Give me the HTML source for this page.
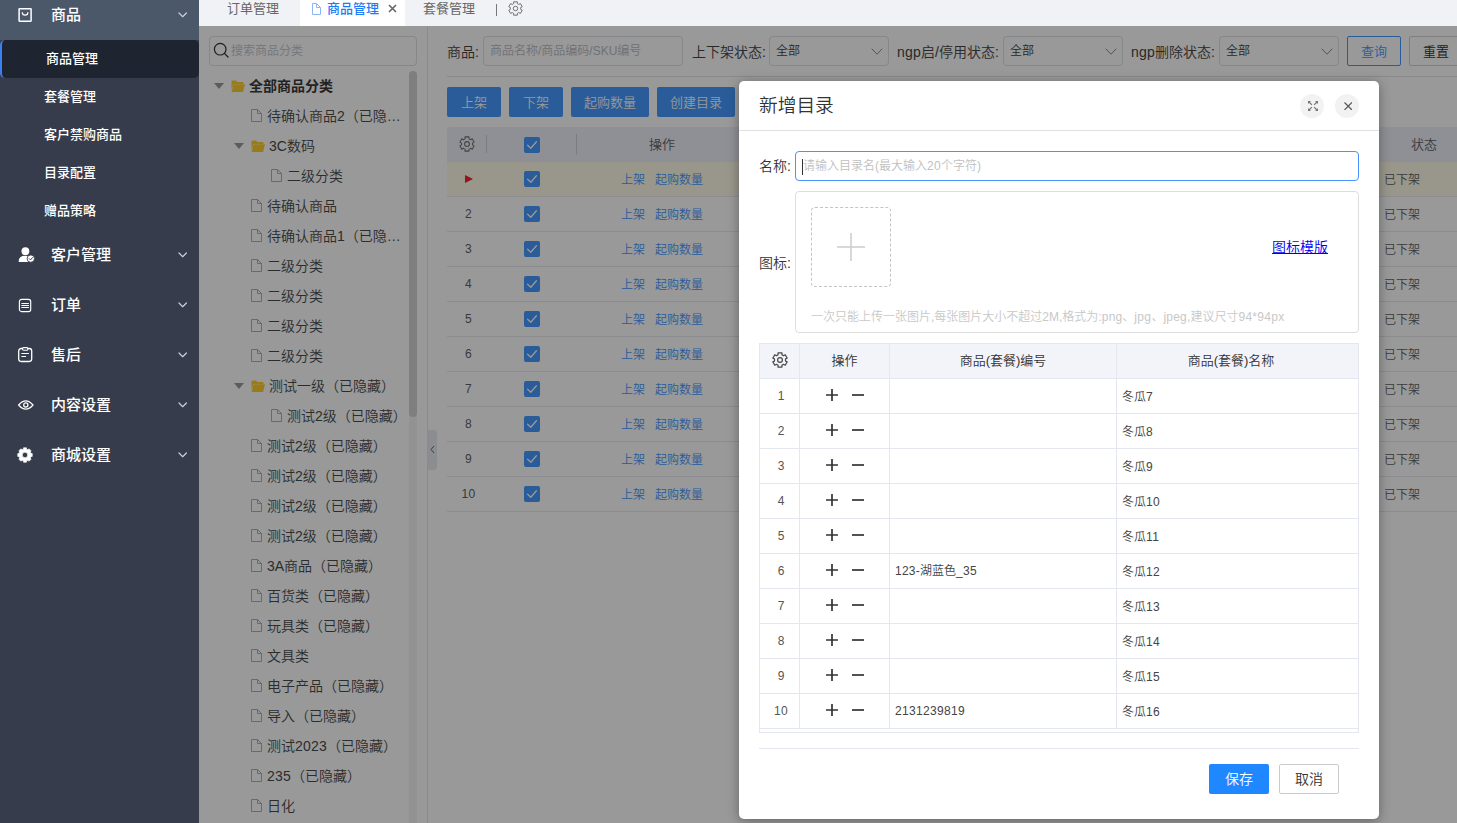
<!DOCTYPE html>
<html lang="zh-CN">
<head>
<meta charset="utf-8">
<title>商品管理</title>
<style>
*{box-sizing:border-box;margin:0;padding:0}
html,body{width:1457px;height:823px;overflow:hidden;background:#fff}
body{font-family:"Liberation Sans","Noto Sans CJK SC",sans-serif;font-size:13px;color:#333;position:relative}
.b{position:absolute;display:block}
.t{position:absolute;white-space:nowrap}
#side{position:absolute;left:0;top:0;width:199px;height:823px;background:#363c4b;overflow:hidden}
#tabs{position:absolute;left:199px;top:0;width:1258px;height:26px;background:#f0f2f5;overflow:hidden}
#content{position:absolute;left:199px;top:26px;width:1258px;height:797px;background:#fff;overflow:hidden;font-weight:350}
#mask{position:absolute;left:199px;top:26px;width:1258px;height:797px;background:rgba(0,0,0,.4)}
#modal{font-weight:350;position:absolute;left:739px;top:81px;width:640px;height:738px;background:#fff;border-radius:5px;box-shadow:0 2px 12px rgba(0,0,0,.35)}
</style>
</head>
<body>
<div id="side">
<div class="b" style="left:0px;top:0px;width:199px;height:40px;background:#4a586a;"></div>
<div class="b" style="left:0px;top:40px;width:199px;height:38px;background:#1f2530;border-left:2px solid #3d7ff0;border-radius:5px;"></div>
<svg class="b" style="left:18px;top:8px;" width="14" height="14" viewBox="0 0 14 14"><rect x="1.1" y="0.75" width="12" height="12.5" rx="0.4" fill="none" stroke="#fff" stroke-width="1.5"/><path d="M4.3 4.2 A2.8 3 0 0 0 9.9 4.2" fill="none" stroke="#fff" stroke-width="1.2"/></svg>
<div class="t " style="left:51px;top:2.8px;height:23px;line-height:23px;font-size:15px;color:#fff;font-weight:500;">商品</div>
<svg class="b" style="left:177.10000000000002px;top:10.6px;" width="11.4" height="8.0" viewBox="0 0 11.4 8.0"><path d="M2 2 L5.7 5.7 L9.4 2" fill="none" stroke="#c8ccd4" stroke-width="1.25" stroke-linecap="round" stroke-linejoin="round"/></svg>
<div class="t " style="left:46px;top:47.7px;height:21px;line-height:21px;font-size:13px;color:#fff;font-weight:500;">商品管理</div>
<div class="t " style="left:44px;top:85.7px;height:21px;line-height:21px;font-size:13px;color:#fff;font-weight:500;">套餐管理</div>
<div class="t " style="left:44px;top:123.7px;height:21px;line-height:21px;font-size:13px;color:#fff;font-weight:500;">客户禁购商品</div>
<div class="t " style="left:44px;top:161.7px;height:21px;line-height:21px;font-size:13px;color:#fff;font-weight:500;">目录配置</div>
<div class="t " style="left:44px;top:199.7px;height:21px;line-height:21px;font-size:13px;color:#fff;font-weight:500;">赠品策略</div>
<div class="t " style="left:51px;top:243px;height:23px;line-height:23px;font-size:15px;color:#fff;font-weight:500;">客户管理</div>
<svg class="b" style="left:177.10000000000002px;top:250.7px;" width="11.4" height="8.0" viewBox="0 0 11.4 8.0"><path d="M2 2 L5.7 5.7 L9.4 2" fill="none" stroke="#c8ccd4" stroke-width="1.25" stroke-linecap="round" stroke-linejoin="round"/></svg>
<div class="t " style="left:51px;top:293px;height:23px;line-height:23px;font-size:15px;color:#fff;font-weight:500;">订单</div>
<svg class="b" style="left:177.10000000000002px;top:300.7px;" width="11.4" height="8.0" viewBox="0 0 11.4 8.0"><path d="M2 2 L5.7 5.7 L9.4 2" fill="none" stroke="#c8ccd4" stroke-width="1.25" stroke-linecap="round" stroke-linejoin="round"/></svg>
<div class="t " style="left:51px;top:343px;height:23px;line-height:23px;font-size:15px;color:#fff;font-weight:500;">售后</div>
<svg class="b" style="left:177.10000000000002px;top:350.7px;" width="11.4" height="8.0" viewBox="0 0 11.4 8.0"><path d="M2 2 L5.7 5.7 L9.4 2" fill="none" stroke="#c8ccd4" stroke-width="1.25" stroke-linecap="round" stroke-linejoin="round"/></svg>
<div class="t " style="left:51px;top:393px;height:23px;line-height:23px;font-size:15px;color:#fff;font-weight:500;">内容设置</div>
<svg class="b" style="left:177.10000000000002px;top:400.7px;" width="11.4" height="8.0" viewBox="0 0 11.4 8.0"><path d="M2 2 L5.7 5.7 L9.4 2" fill="none" stroke="#c8ccd4" stroke-width="1.25" stroke-linecap="round" stroke-linejoin="round"/></svg>
<div class="t " style="left:51px;top:443px;height:23px;line-height:23px;font-size:15px;color:#fff;font-weight:500;">商城设置</div>
<svg class="b" style="left:177.10000000000002px;top:450.7px;" width="11.4" height="8.0" viewBox="0 0 11.4 8.0"><path d="M2 2 L5.7 5.7 L9.4 2" fill="none" stroke="#c8ccd4" stroke-width="1.25" stroke-linecap="round" stroke-linejoin="round"/></svg>
<svg class="b" style="left:17.5px;top:247px;" width="17" height="16" viewBox="0 0 17 16"><circle cx="7.4" cy="4.2" r="3.9" fill="#fff"/><path d="M0.6 14.6 Q0.6 8.8 7.4 8.8 Q13 8.8 13.6 13 L13.6 15 H1.4 Q0.6 15 0.6 14.6 Z" fill="#fff"/><circle cx="12.8" cy="11.6" r="3.7" fill="#fff" stroke="#363c4b" stroke-width="0.9"/><path d="M11.2 11.6 L12.5 12.9 L14.5 10.6" fill="none" stroke="#363c4b" stroke-width="1" stroke-linecap="round" stroke-linejoin="round"/></svg>
<svg class="b" style="left:18px;top:298px;" width="14" height="15" viewBox="0 0 14 15"><rect x="1.4" y="1.3" width="11.3" height="12.3" rx="2.2" fill="none" stroke="#fff" stroke-width="1.15"/><path d="M3.4 5.5 H10.9 M3.4 7.5 H10.9 M3.4 9.5 H10.9" stroke="#fff" stroke-width="1" fill="none"/></svg>
<svg class="b" style="left:18px;top:347px;" width="15" height="16" viewBox="0 0 15 16"><rect x="0.7" y="1.5" width="13" height="13" rx="2.4" fill="none" stroke="#fff" stroke-width="1.3"/><rect x="4.5" y="0.6" width="5.4" height="2.6" rx="1.2" fill="#363c4b" stroke="#fff" stroke-width="1.1"/><path d="M3.4 6.5 H10.9 M3.4 9.5 H8" stroke="#fff" stroke-width="1.1" fill="none"/></svg>
<svg class="b" style="left:18px;top:399px;" width="16" height="12" viewBox="0 0 16 12"><path d="M0.6 6 Q7.8 -2.2 15 6 Q7.8 14.2 0.6 6 Z" fill="none" stroke="#fff" stroke-width="1.2"/><circle cx="7.8" cy="6" r="2.1" fill="none" stroke="#fff" stroke-width="1.3"/></svg>
<svg class="b" style="left:17.1px;top:447.3px;" width="16" height="16" viewBox="0 0 16 16"><path d="M6.36 2.13 L6.56 0.74 L9.44 0.74 L9.64 2.13 L10.99 2.68 L12.11 1.85 L14.15 3.89 L13.32 5.01 L13.87 6.36 L15.26 6.56 L15.26 9.44 L13.87 9.64 L13.32 10.99 L14.15 12.11 L12.11 14.15 L10.99 13.32 L9.64 13.87 L9.44 15.26 L6.56 15.26 L6.36 13.87 L5.01 13.32 L3.89 14.15 L1.85 12.11 L2.68 10.99 L2.13 9.64 L0.74 9.44 L0.74 6.56 L2.13 6.36 L2.68 5.01 L1.85 3.89 L3.89 1.85 L5.01 2.68Z M8 5.3a2.7 2.7 0 1 0 0 5.4 2.7 2.7 0 0 0 0-5.4z" fill="#fff" fill-rule="evenodd" stroke="#fff" stroke-width="0.6" stroke-linejoin="round"/></svg>
</div>
<div id="tabs">
<div class="b" style="left:101px;top:0px;width:105px;height:26px;background:#fff;"></div>
<div class="t " style="left:28px;top:-2.2px;height:21px;line-height:21px;font-size:13px;color:#666;">订单管理</div>
<svg class="b" style="left:113px;top:3px;" width="9" height="12" viewBox="0 0 9 12"><path d="M0.5 0.5 H4.5 L8.5 4.5 V11.5 H0.5 Z M4.5 0.5 V4.5 H8.5" fill="none" stroke="#8fb4f5" stroke-width="1" stroke-linejoin="round"/></svg>
<div class="t " style="left:128px;top:-2.2px;height:21px;line-height:21px;font-size:13px;color:#1f7bf5;font-weight:500;">商品管理</div>
<svg class="b" style="left:188.8px;top:4.2px;" width="9" height="9" viewBox="0 0 9 9"><path d="M1 1 L8 8 M8 1 L1 8" stroke="#666" stroke-width="1.6" fill="none"/></svg>
<div class="t " style="left:224px;top:-2.2px;height:21px;line-height:21px;font-size:13px;color:#666;">套餐管理</div>
<div class="b" style="left:296.5px;top:4px;width:1px;height:12px;background:#777;"></div>
<svg class="b" style="left:308.5px;top:0.5px;" width="15" height="15" viewBox="0 0 16 16"><path d="M5.44 3.13 L6.06 2.85 L6.03 0.87 L9.97 0.87 L9.94 2.85 L10.56 3.13 L10.94 3.35 L11.49 3.75 L13.19 2.72 L15.16 6.14 L13.43 7.10 L13.50 7.78 L13.50 8.22 L13.43 8.90 L15.16 9.86 L13.19 13.28 L11.49 12.25 L10.94 12.65 L10.56 12.87 L9.94 13.15 L9.97 15.13 L6.03 15.13 L6.06 13.15 L5.44 12.87 L5.06 12.65 L4.51 12.25 L2.81 13.28 L0.84 9.86 L2.57 8.90 L2.50 8.22 L2.50 7.78 L2.57 7.10 L0.84 6.14 L2.81 2.72 L4.51 3.75 L5.06 3.35Z" fill="none" stroke="#666" stroke-width="1" stroke-linejoin="round"/><circle cx="8" cy="8" r="2.4" fill="none" stroke="#666" stroke-width="1"/></svg>
</div>
<div id="content">
<div class="b" style="left:-199px;top:-26px;width:1457px;height:823px">
<div class="b" style="left:209px;top:36px;width:208px;height:30px;border:1px solid #dfe1e6;border-radius:4px;"></div>
<svg class="b" style="left:213px;top:42px;" width="16" height="16" viewBox="0 0 16 16"><circle cx="7.2" cy="7.2" r="5.8" fill="none" stroke="#333" stroke-width="1.2"/><path d="M11.4 11.4 L15 15" stroke="#333" stroke-width="1.3" stroke-linecap="round"/></svg>
<div class="t " style="left:231px;top:41px;height:20px;line-height:20px;font-size:12px;color:#c0c4cc;">搜索商品分类</div>
<div class="b" style="left:409px;top:71px;width:8px;height:760px;background:#f3f3f3;border-radius:4px;"></div>
<div class="b" style="left:409px;top:71px;width:8px;height:346px;background:#d4d4d4;border-radius:4px;"></div>
<div class="b" style="left:427px;top:26px;width:1px;height:800px;background:#e8e8e8;"></div>
<div class="b" style="left:428px;top:430px;width:9px;height:40px;background:#e9ebf2;border-radius:0 4px 4px 0;"></div>
<svg class="b" style="left:430px;top:445px;" width="5" height="9" viewBox="0 0 5 9"><path d="M4 1 L1 4.5 L4 8" fill="none" stroke="#666" stroke-width="1"/></svg>
<svg class="b" style="left:214px;top:83px;" width="10" height="6" viewBox="0 0 10 6"><path d="M0 0 H10 L5 6 Z" fill="#999"/></svg>
<svg class="b" style="left:231px;top:80px;" width="14" height="12" viewBox="0 0 14 12"><path d="M0.5 1.5 Q0.5 0.5 1.5 0.5 H5 L6.5 2 H11.5 Q12.5 2 12.5 3 V4 H2.5 L0.5 10 Z" fill="#ffce2e"/><path d="M2.6 4.2 H14 L12.2 11.5 Q12 12 11.4 12 H1 Q0.4 12 0.6 11.4 Z" fill="#ffce2e"/></svg>
<div class="t " style="left:249px;top:75px;height:22px;line-height:22px;font-size:14px;color:#3a3a3a;font-weight:bold;">全部商品分类</div>
<svg class="b" style="left:251px;top:109px;" width="11" height="13" viewBox="0 0 11 13"><path d="M0.5 0.5 H6.5 L10.5 4.5 V12.5 H0.5 Z M6.5 0.5 V4.5 H10.5" fill="none" stroke="#b0b0b4" stroke-width="1" stroke-linejoin="round"/></svg>
<div class="t " style="left:267px;top:105px;height:22px;line-height:22px;font-size:14px;color:#4a4a4a;">待确认商品2（已隐…</div>
<svg class="b" style="left:234px;top:143px;" width="10" height="6" viewBox="0 0 10 6"><path d="M0 0 H10 L5 6 Z" fill="#999"/></svg>
<svg class="b" style="left:251px;top:140px;" width="14" height="12" viewBox="0 0 14 12"><path d="M0.5 1.5 Q0.5 0.5 1.5 0.5 H5 L6.5 2 H11.5 Q12.5 2 12.5 3 V4 H2.5 L0.5 10 Z" fill="#ffce2e"/><path d="M2.6 4.2 H14 L12.2 11.5 Q12 12 11.4 12 H1 Q0.4 12 0.6 11.4 Z" fill="#ffce2e"/></svg>
<div class="t " style="left:269px;top:135px;height:22px;line-height:22px;font-size:14px;color:#4a4a4a;">3C数码</div>
<svg class="b" style="left:271px;top:169px;" width="11" height="13" viewBox="0 0 11 13"><path d="M0.5 0.5 H6.5 L10.5 4.5 V12.5 H0.5 Z M6.5 0.5 V4.5 H10.5" fill="none" stroke="#b0b0b4" stroke-width="1" stroke-linejoin="round"/></svg>
<div class="t " style="left:287px;top:165px;height:22px;line-height:22px;font-size:14px;color:#4a4a4a;">二级分类</div>
<svg class="b" style="left:251px;top:199px;" width="11" height="13" viewBox="0 0 11 13"><path d="M0.5 0.5 H6.5 L10.5 4.5 V12.5 H0.5 Z M6.5 0.5 V4.5 H10.5" fill="none" stroke="#b0b0b4" stroke-width="1" stroke-linejoin="round"/></svg>
<div class="t " style="left:267px;top:195px;height:22px;line-height:22px;font-size:14px;color:#4a4a4a;">待确认商品</div>
<svg class="b" style="left:251px;top:229px;" width="11" height="13" viewBox="0 0 11 13"><path d="M0.5 0.5 H6.5 L10.5 4.5 V12.5 H0.5 Z M6.5 0.5 V4.5 H10.5" fill="none" stroke="#b0b0b4" stroke-width="1" stroke-linejoin="round"/></svg>
<div class="t " style="left:267px;top:225px;height:22px;line-height:22px;font-size:14px;color:#4a4a4a;">待确认商品1（已隐…</div>
<svg class="b" style="left:251px;top:259px;" width="11" height="13" viewBox="0 0 11 13"><path d="M0.5 0.5 H6.5 L10.5 4.5 V12.5 H0.5 Z M6.5 0.5 V4.5 H10.5" fill="none" stroke="#b0b0b4" stroke-width="1" stroke-linejoin="round"/></svg>
<div class="t " style="left:267px;top:255px;height:22px;line-height:22px;font-size:14px;color:#4a4a4a;">二级分类</div>
<svg class="b" style="left:251px;top:289px;" width="11" height="13" viewBox="0 0 11 13"><path d="M0.5 0.5 H6.5 L10.5 4.5 V12.5 H0.5 Z M6.5 0.5 V4.5 H10.5" fill="none" stroke="#b0b0b4" stroke-width="1" stroke-linejoin="round"/></svg>
<div class="t " style="left:267px;top:285px;height:22px;line-height:22px;font-size:14px;color:#4a4a4a;">二级分类</div>
<svg class="b" style="left:251px;top:319px;" width="11" height="13" viewBox="0 0 11 13"><path d="M0.5 0.5 H6.5 L10.5 4.5 V12.5 H0.5 Z M6.5 0.5 V4.5 H10.5" fill="none" stroke="#b0b0b4" stroke-width="1" stroke-linejoin="round"/></svg>
<div class="t " style="left:267px;top:315px;height:22px;line-height:22px;font-size:14px;color:#4a4a4a;">二级分类</div>
<svg class="b" style="left:251px;top:349px;" width="11" height="13" viewBox="0 0 11 13"><path d="M0.5 0.5 H6.5 L10.5 4.5 V12.5 H0.5 Z M6.5 0.5 V4.5 H10.5" fill="none" stroke="#b0b0b4" stroke-width="1" stroke-linejoin="round"/></svg>
<div class="t " style="left:267px;top:345px;height:22px;line-height:22px;font-size:14px;color:#4a4a4a;">二级分类</div>
<svg class="b" style="left:234px;top:383px;" width="10" height="6" viewBox="0 0 10 6"><path d="M0 0 H10 L5 6 Z" fill="#999"/></svg>
<svg class="b" style="left:251px;top:380px;" width="14" height="12" viewBox="0 0 14 12"><path d="M0.5 1.5 Q0.5 0.5 1.5 0.5 H5 L6.5 2 H11.5 Q12.5 2 12.5 3 V4 H2.5 L0.5 10 Z" fill="#ffce2e"/><path d="M2.6 4.2 H14 L12.2 11.5 Q12 12 11.4 12 H1 Q0.4 12 0.6 11.4 Z" fill="#ffce2e"/></svg>
<div class="t " style="left:269px;top:375px;height:22px;line-height:22px;font-size:14px;color:#4a4a4a;">测试一级（已隐藏）</div>
<svg class="b" style="left:271px;top:409px;" width="11" height="13" viewBox="0 0 11 13"><path d="M0.5 0.5 H6.5 L10.5 4.5 V12.5 H0.5 Z M6.5 0.5 V4.5 H10.5" fill="none" stroke="#b0b0b4" stroke-width="1" stroke-linejoin="round"/></svg>
<div class="t " style="left:287px;top:405px;height:22px;line-height:22px;font-size:14px;color:#4a4a4a;">测试2级（已隐藏）</div>
<svg class="b" style="left:251px;top:439px;" width="11" height="13" viewBox="0 0 11 13"><path d="M0.5 0.5 H6.5 L10.5 4.5 V12.5 H0.5 Z M6.5 0.5 V4.5 H10.5" fill="none" stroke="#b0b0b4" stroke-width="1" stroke-linejoin="round"/></svg>
<div class="t " style="left:267px;top:435px;height:22px;line-height:22px;font-size:14px;color:#4a4a4a;">测试2级（已隐藏）</div>
<svg class="b" style="left:251px;top:469px;" width="11" height="13" viewBox="0 0 11 13"><path d="M0.5 0.5 H6.5 L10.5 4.5 V12.5 H0.5 Z M6.5 0.5 V4.5 H10.5" fill="none" stroke="#b0b0b4" stroke-width="1" stroke-linejoin="round"/></svg>
<div class="t " style="left:267px;top:465px;height:22px;line-height:22px;font-size:14px;color:#4a4a4a;">测试2级（已隐藏）</div>
<svg class="b" style="left:251px;top:499px;" width="11" height="13" viewBox="0 0 11 13"><path d="M0.5 0.5 H6.5 L10.5 4.5 V12.5 H0.5 Z M6.5 0.5 V4.5 H10.5" fill="none" stroke="#b0b0b4" stroke-width="1" stroke-linejoin="round"/></svg>
<div class="t " style="left:267px;top:495px;height:22px;line-height:22px;font-size:14px;color:#4a4a4a;">测试2级（已隐藏）</div>
<svg class="b" style="left:251px;top:529px;" width="11" height="13" viewBox="0 0 11 13"><path d="M0.5 0.5 H6.5 L10.5 4.5 V12.5 H0.5 Z M6.5 0.5 V4.5 H10.5" fill="none" stroke="#b0b0b4" stroke-width="1" stroke-linejoin="round"/></svg>
<div class="t " style="left:267px;top:525px;height:22px;line-height:22px;font-size:14px;color:#4a4a4a;">测试2级（已隐藏）</div>
<svg class="b" style="left:251px;top:559px;" width="11" height="13" viewBox="0 0 11 13"><path d="M0.5 0.5 H6.5 L10.5 4.5 V12.5 H0.5 Z M6.5 0.5 V4.5 H10.5" fill="none" stroke="#b0b0b4" stroke-width="1" stroke-linejoin="round"/></svg>
<div class="t " style="left:267px;top:555px;height:22px;line-height:22px;font-size:14px;color:#4a4a4a;">3A商品（已隐藏）</div>
<svg class="b" style="left:251px;top:589px;" width="11" height="13" viewBox="0 0 11 13"><path d="M0.5 0.5 H6.5 L10.5 4.5 V12.5 H0.5 Z M6.5 0.5 V4.5 H10.5" fill="none" stroke="#b0b0b4" stroke-width="1" stroke-linejoin="round"/></svg>
<div class="t " style="left:267px;top:585px;height:22px;line-height:22px;font-size:14px;color:#4a4a4a;">百货类（已隐藏）</div>
<svg class="b" style="left:251px;top:619px;" width="11" height="13" viewBox="0 0 11 13"><path d="M0.5 0.5 H6.5 L10.5 4.5 V12.5 H0.5 Z M6.5 0.5 V4.5 H10.5" fill="none" stroke="#b0b0b4" stroke-width="1" stroke-linejoin="round"/></svg>
<div class="t " style="left:267px;top:615px;height:22px;line-height:22px;font-size:14px;color:#4a4a4a;">玩具类（已隐藏）</div>
<svg class="b" style="left:251px;top:649px;" width="11" height="13" viewBox="0 0 11 13"><path d="M0.5 0.5 H6.5 L10.5 4.5 V12.5 H0.5 Z M6.5 0.5 V4.5 H10.5" fill="none" stroke="#b0b0b4" stroke-width="1" stroke-linejoin="round"/></svg>
<div class="t " style="left:267px;top:645px;height:22px;line-height:22px;font-size:14px;color:#4a4a4a;">文具类</div>
<svg class="b" style="left:251px;top:679px;" width="11" height="13" viewBox="0 0 11 13"><path d="M0.5 0.5 H6.5 L10.5 4.5 V12.5 H0.5 Z M6.5 0.5 V4.5 H10.5" fill="none" stroke="#b0b0b4" stroke-width="1" stroke-linejoin="round"/></svg>
<div class="t " style="left:267px;top:675px;height:22px;line-height:22px;font-size:14px;color:#4a4a4a;">电子产品（已隐藏）</div>
<svg class="b" style="left:251px;top:709px;" width="11" height="13" viewBox="0 0 11 13"><path d="M0.5 0.5 H6.5 L10.5 4.5 V12.5 H0.5 Z M6.5 0.5 V4.5 H10.5" fill="none" stroke="#b0b0b4" stroke-width="1" stroke-linejoin="round"/></svg>
<div class="t " style="left:267px;top:705px;height:22px;line-height:22px;font-size:14px;color:#4a4a4a;">导入（已隐藏）</div>
<svg class="b" style="left:251px;top:739px;" width="11" height="13" viewBox="0 0 11 13"><path d="M0.5 0.5 H6.5 L10.5 4.5 V12.5 H0.5 Z M6.5 0.5 V4.5 H10.5" fill="none" stroke="#b0b0b4" stroke-width="1" stroke-linejoin="round"/></svg>
<div class="t " style="left:267px;top:735px;height:22px;line-height:22px;font-size:14px;color:#4a4a4a;">测试<span style="letter-spacing:0.21px">2023</span>（已隐藏）</div>
<svg class="b" style="left:251px;top:769px;" width="11" height="13" viewBox="0 0 11 13"><path d="M0.5 0.5 H6.5 L10.5 4.5 V12.5 H0.5 Z M6.5 0.5 V4.5 H10.5" fill="none" stroke="#b0b0b4" stroke-width="1" stroke-linejoin="round"/></svg>
<div class="t " style="left:267px;top:765px;height:22px;line-height:22px;font-size:14px;color:#4a4a4a;"><span style="letter-spacing:0.21px">235</span>（已隐藏）</div>
<svg class="b" style="left:251px;top:799px;" width="11" height="13" viewBox="0 0 11 13"><path d="M0.5 0.5 H6.5 L10.5 4.5 V12.5 H0.5 Z M6.5 0.5 V4.5 H10.5" fill="none" stroke="#b0b0b4" stroke-width="1" stroke-linejoin="round"/></svg>
<div class="t " style="left:267px;top:795px;height:22px;line-height:22px;font-size:14px;color:#4a4a4a;">日化</div>
<div class="t " style="left:447px;top:41px;height:22px;line-height:22px;font-size:14px;color:#444;">商品:</div>
<div class="b" style="left:483px;top:36px;width:200px;height:30px;border:1px solid #dfe1e6;border-radius:4px;"></div>
<div class="t " style="left:490px;top:41px;height:20px;line-height:20px;font-size:12px;color:#b8bcc4;">商品名称/商品编码/SKU编号</div>
<div class="t " style="left:692px;top:41px;height:22px;line-height:22px;font-size:14px;color:#444;">上下架状态:</div>
<div class="b" style="left:769px;top:36px;width:120px;height:30px;border:1px solid #dfe1e6;border-radius:4px;"></div><div class="t " style="left:776px;top:41px;height:20px;line-height:20px;font-size:12px;color:#444;">全部</div><svg class="b" style="left:870.0px;top:46.85px;" width="14" height="9.5" viewBox="0 0 14 9.5"><path d="M2 2 L7 7.2 L12 2" fill="none" stroke="#8c8c8c" stroke-width="1" stroke-linecap="round" stroke-linejoin="round"/></svg>
<div class="t " style="left:897px;top:41px;height:22px;line-height:22px;font-size:14px;color:#444;"><span style="letter-spacing:0.21px">ngp</span>启/停用状态:</div>
<div class="b" style="left:1003px;top:36px;width:120px;height:30px;border:1px solid #dfe1e6;border-radius:4px;"></div><div class="t " style="left:1010px;top:41px;height:20px;line-height:20px;font-size:12px;color:#444;">全部</div><svg class="b" style="left:1104.0px;top:46.85px;" width="14" height="9.5" viewBox="0 0 14 9.5"><path d="M2 2 L7 7.2 L12 2" fill="none" stroke="#8c8c8c" stroke-width="1" stroke-linecap="round" stroke-linejoin="round"/></svg>
<div class="t " style="left:1131px;top:41px;height:22px;line-height:22px;font-size:14px;color:#444;"><span style="letter-spacing:0.21px">ngp</span>删除状态:</div>
<div class="b" style="left:1219px;top:36px;width:120px;height:30px;border:1px solid #dfe1e6;border-radius:4px;"></div><div class="t " style="left:1226px;top:41px;height:20px;line-height:20px;font-size:12px;color:#444;">全部</div><svg class="b" style="left:1320.0px;top:46.85px;" width="14" height="9.5" viewBox="0 0 14 9.5"><path d="M2 2 L7 7.2 L12 2" fill="none" stroke="#8c8c8c" stroke-width="1" stroke-linecap="round" stroke-linejoin="round"/></svg>
<div class="b" style="left:1347px;top:36px;width:54px;height:30px;border:1px solid #4599ff;border-radius:2px;"></div>
<div class="t " style="left:1347px;top:40.5px;height:21px;line-height:21px;font-size:13px;color:#4599ff;width:54px;text-align:center;">查询</div>
<div class="b" style="left:1409px;top:36px;width:54px;height:30px;border:1px solid #d4d4d4;border-radius:2px;"></div>
<div class="t " style="left:1409px;top:40.5px;height:21px;line-height:21px;font-size:13px;color:#333;width:54px;text-align:center;">重置</div>
<div class="b" style="left:447px;top:76px;width:1010px;height:1px;background:#e4e4e4;"></div>
<div class="b" style="left:447px;top:87px;width:54px;height:30px;background:#4599ff;border-radius:2px;"></div>
<div class="t " style="left:447px;top:91.5px;height:21px;line-height:21px;font-size:13px;color:#fff;width:54px;text-align:center;">上架</div>
<div class="b" style="left:509px;top:87px;width:54px;height:30px;background:#4599ff;border-radius:2px;"></div>
<div class="t " style="left:509px;top:91.5px;height:21px;line-height:21px;font-size:13px;color:#fff;width:54px;text-align:center;">下架</div>
<div class="b" style="left:571px;top:87px;width:78px;height:30px;background:#4599ff;border-radius:2px;"></div>
<div class="t " style="left:571px;top:91.5px;height:21px;line-height:21px;font-size:13px;color:#fff;width:78px;text-align:center;">起购数量</div>
<div class="b" style="left:657px;top:87px;width:78px;height:30px;background:#4599ff;border-radius:2px;"></div>
<div class="t " style="left:657px;top:91.5px;height:21px;line-height:21px;font-size:13px;color:#fff;width:78px;text-align:center;">创建目录</div>
<div class="b" style="left:447px;top:127px;width:1010px;height:35px;background:#eef0f8;border-radius:4px 0 0 0;"></div>
<svg class="b" style="left:459.0px;top:135.8px;" width="16" height="16" viewBox="0 0 16 16"><path d="M5.44 3.13 L6.06 2.85 L6.03 0.87 L9.97 0.87 L9.94 2.85 L10.56 3.13 L10.94 3.35 L11.49 3.75 L13.19 2.72 L15.16 6.14 L13.43 7.10 L13.50 7.78 L13.50 8.22 L13.43 8.90 L15.16 9.86 L13.19 13.28 L11.49 12.25 L10.94 12.65 L10.56 12.87 L9.94 13.15 L9.97 15.13 L6.03 15.13 L6.06 13.15 L5.44 12.87 L5.06 12.65 L4.51 12.25 L2.81 13.28 L0.84 9.86 L2.57 8.90 L2.50 8.22 L2.50 7.78 L2.57 7.10 L0.84 6.14 L2.81 2.72 L4.51 3.75 L5.06 3.35Z" fill="none" stroke="#707070" stroke-width="1.05" stroke-linejoin="round"/><circle cx="8" cy="8" r="2.4" fill="none" stroke="#707070" stroke-width="1.05"/></svg>
<div class="b" style="left:486px;top:135px;width:1px;height:18px;background:#cfd0da;"></div>
<div class="b" style="left:576px;top:134px;width:1px;height:21px;background:#cfd0da;"></div>
<svg class="b" style="left:524px;top:137px;" width="16" height="16" viewBox="0 0 16 16"><rect x="0" y="0" width="16" height="16" rx="2" fill="#4599ff"/><path d="M3.6 8.2 L6.8 11.2 L12.4 4.8" fill="none" stroke="#fff" stroke-width="1.3" stroke-linecap="round" stroke-linejoin="round"/></svg>
<div class="t " style="left:577px;top:134px;height:21px;line-height:21px;font-size:13px;color:#606266;width:170px;text-align:center;">操作</div>
<div class="t " style="left:1390px;top:134px;height:21px;line-height:21px;font-size:13px;color:#606266;width:68px;text-align:center;">状态</div>
<div class="b" style="left:447px;top:162px;width:1010px;height:34px;background:#fffae8;"></div>
<svg class="b" style="left:465px;top:175px;" width="8" height="8" viewBox="0 0 8 8"><path d="M0 0 L8 4 L0 8 Z" fill="#f5222d"/></svg>
<div class="b" style="left:447px;top:196px;width:1010px;height:1px;background:#e8eaf0;"></div>
<svg class="b" style="left:524px;top:171px;" width="16" height="16" viewBox="0 0 16 16"><rect x="0" y="0" width="16" height="16" rx="2" fill="#4599ff"/><path d="M3.6 8.2 L6.8 11.2 L12.4 4.8" fill="none" stroke="#fff" stroke-width="1.3" stroke-linecap="round" stroke-linejoin="round"/></svg>
<div class="t " style="left:621px;top:169.5px;height:20px;line-height:20px;font-size:12px;color:#4599ff;">上架</div>
<div class="t " style="left:655px;top:169.5px;height:20px;line-height:20px;font-size:12px;color:#4599ff;">起购数量</div>
<div class="t " style="left:1384px;top:169.5px;height:20px;line-height:20px;font-size:12px;color:#606266;">已下架</div>
<div class="t " style="left:447.4px;top:203.6px;height:20px;line-height:20px;font-size:12px;color:#606266;width:42px;text-align:center;">2</div>
<div class="b" style="left:447px;top:231px;width:1010px;height:1px;background:#e8eaf0;"></div>
<svg class="b" style="left:524px;top:206px;" width="16" height="16" viewBox="0 0 16 16"><rect x="0" y="0" width="16" height="16" rx="2" fill="#4599ff"/><path d="M3.6 8.2 L6.8 11.2 L12.4 4.8" fill="none" stroke="#fff" stroke-width="1.3" stroke-linecap="round" stroke-linejoin="round"/></svg>
<div class="t " style="left:621px;top:204.5px;height:20px;line-height:20px;font-size:12px;color:#4599ff;">上架</div>
<div class="t " style="left:655px;top:204.5px;height:20px;line-height:20px;font-size:12px;color:#4599ff;">起购数量</div>
<div class="t " style="left:1384px;top:204.5px;height:20px;line-height:20px;font-size:12px;color:#606266;">已下架</div>
<div class="t " style="left:447.4px;top:238.6px;height:20px;line-height:20px;font-size:12px;color:#606266;width:42px;text-align:center;">3</div>
<div class="b" style="left:447px;top:266px;width:1010px;height:1px;background:#e8eaf0;"></div>
<svg class="b" style="left:524px;top:241px;" width="16" height="16" viewBox="0 0 16 16"><rect x="0" y="0" width="16" height="16" rx="2" fill="#4599ff"/><path d="M3.6 8.2 L6.8 11.2 L12.4 4.8" fill="none" stroke="#fff" stroke-width="1.3" stroke-linecap="round" stroke-linejoin="round"/></svg>
<div class="t " style="left:621px;top:239.5px;height:20px;line-height:20px;font-size:12px;color:#4599ff;">上架</div>
<div class="t " style="left:655px;top:239.5px;height:20px;line-height:20px;font-size:12px;color:#4599ff;">起购数量</div>
<div class="t " style="left:1384px;top:239.5px;height:20px;line-height:20px;font-size:12px;color:#606266;">已下架</div>
<div class="t " style="left:447.4px;top:273.6px;height:20px;line-height:20px;font-size:12px;color:#606266;width:42px;text-align:center;">4</div>
<div class="b" style="left:447px;top:301px;width:1010px;height:1px;background:#e8eaf0;"></div>
<svg class="b" style="left:524px;top:276px;" width="16" height="16" viewBox="0 0 16 16"><rect x="0" y="0" width="16" height="16" rx="2" fill="#4599ff"/><path d="M3.6 8.2 L6.8 11.2 L12.4 4.8" fill="none" stroke="#fff" stroke-width="1.3" stroke-linecap="round" stroke-linejoin="round"/></svg>
<div class="t " style="left:621px;top:274.5px;height:20px;line-height:20px;font-size:12px;color:#4599ff;">上架</div>
<div class="t " style="left:655px;top:274.5px;height:20px;line-height:20px;font-size:12px;color:#4599ff;">起购数量</div>
<div class="t " style="left:1384px;top:274.5px;height:20px;line-height:20px;font-size:12px;color:#606266;">已下架</div>
<div class="t " style="left:447.4px;top:308.6px;height:20px;line-height:20px;font-size:12px;color:#606266;width:42px;text-align:center;">5</div>
<div class="b" style="left:447px;top:336px;width:1010px;height:1px;background:#e8eaf0;"></div>
<svg class="b" style="left:524px;top:311px;" width="16" height="16" viewBox="0 0 16 16"><rect x="0" y="0" width="16" height="16" rx="2" fill="#4599ff"/><path d="M3.6 8.2 L6.8 11.2 L12.4 4.8" fill="none" stroke="#fff" stroke-width="1.3" stroke-linecap="round" stroke-linejoin="round"/></svg>
<div class="t " style="left:621px;top:309.5px;height:20px;line-height:20px;font-size:12px;color:#4599ff;">上架</div>
<div class="t " style="left:655px;top:309.5px;height:20px;line-height:20px;font-size:12px;color:#4599ff;">起购数量</div>
<div class="t " style="left:1384px;top:309.5px;height:20px;line-height:20px;font-size:12px;color:#606266;">已下架</div>
<div class="t " style="left:447.4px;top:343.6px;height:20px;line-height:20px;font-size:12px;color:#606266;width:42px;text-align:center;">6</div>
<div class="b" style="left:447px;top:371px;width:1010px;height:1px;background:#e8eaf0;"></div>
<svg class="b" style="left:524px;top:346px;" width="16" height="16" viewBox="0 0 16 16"><rect x="0" y="0" width="16" height="16" rx="2" fill="#4599ff"/><path d="M3.6 8.2 L6.8 11.2 L12.4 4.8" fill="none" stroke="#fff" stroke-width="1.3" stroke-linecap="round" stroke-linejoin="round"/></svg>
<div class="t " style="left:621px;top:344.5px;height:20px;line-height:20px;font-size:12px;color:#4599ff;">上架</div>
<div class="t " style="left:655px;top:344.5px;height:20px;line-height:20px;font-size:12px;color:#4599ff;">起购数量</div>
<div class="t " style="left:1384px;top:344.5px;height:20px;line-height:20px;font-size:12px;color:#606266;">已下架</div>
<div class="t " style="left:447.4px;top:378.6px;height:20px;line-height:20px;font-size:12px;color:#606266;width:42px;text-align:center;">7</div>
<div class="b" style="left:447px;top:406px;width:1010px;height:1px;background:#e8eaf0;"></div>
<svg class="b" style="left:524px;top:381px;" width="16" height="16" viewBox="0 0 16 16"><rect x="0" y="0" width="16" height="16" rx="2" fill="#4599ff"/><path d="M3.6 8.2 L6.8 11.2 L12.4 4.8" fill="none" stroke="#fff" stroke-width="1.3" stroke-linecap="round" stroke-linejoin="round"/></svg>
<div class="t " style="left:621px;top:379.5px;height:20px;line-height:20px;font-size:12px;color:#4599ff;">上架</div>
<div class="t " style="left:655px;top:379.5px;height:20px;line-height:20px;font-size:12px;color:#4599ff;">起购数量</div>
<div class="t " style="left:1384px;top:379.5px;height:20px;line-height:20px;font-size:12px;color:#606266;">已下架</div>
<div class="t " style="left:447.4px;top:413.6px;height:20px;line-height:20px;font-size:12px;color:#606266;width:42px;text-align:center;">8</div>
<div class="b" style="left:447px;top:441px;width:1010px;height:1px;background:#e8eaf0;"></div>
<svg class="b" style="left:524px;top:416px;" width="16" height="16" viewBox="0 0 16 16"><rect x="0" y="0" width="16" height="16" rx="2" fill="#4599ff"/><path d="M3.6 8.2 L6.8 11.2 L12.4 4.8" fill="none" stroke="#fff" stroke-width="1.3" stroke-linecap="round" stroke-linejoin="round"/></svg>
<div class="t " style="left:621px;top:414.5px;height:20px;line-height:20px;font-size:12px;color:#4599ff;">上架</div>
<div class="t " style="left:655px;top:414.5px;height:20px;line-height:20px;font-size:12px;color:#4599ff;">起购数量</div>
<div class="t " style="left:1384px;top:414.5px;height:20px;line-height:20px;font-size:12px;color:#606266;">已下架</div>
<div class="t " style="left:447.4px;top:448.6px;height:20px;line-height:20px;font-size:12px;color:#606266;width:42px;text-align:center;">9</div>
<div class="b" style="left:447px;top:476px;width:1010px;height:1px;background:#e8eaf0;"></div>
<svg class="b" style="left:524px;top:451px;" width="16" height="16" viewBox="0 0 16 16"><rect x="0" y="0" width="16" height="16" rx="2" fill="#4599ff"/><path d="M3.6 8.2 L6.8 11.2 L12.4 4.8" fill="none" stroke="#fff" stroke-width="1.3" stroke-linecap="round" stroke-linejoin="round"/></svg>
<div class="t " style="left:621px;top:449.5px;height:20px;line-height:20px;font-size:12px;color:#4599ff;">上架</div>
<div class="t " style="left:655px;top:449.5px;height:20px;line-height:20px;font-size:12px;color:#4599ff;">起购数量</div>
<div class="t " style="left:1384px;top:449.5px;height:20px;line-height:20px;font-size:12px;color:#606266;">已下架</div>
<div class="t " style="left:447.4px;top:483.6px;height:20px;line-height:20px;font-size:12px;color:#606266;width:42px;text-align:center;"><span style="letter-spacing:0.33px">10</span></div>
<div class="b" style="left:447px;top:511px;width:1010px;height:1px;background:#e8eaf0;"></div>
<svg class="b" style="left:524px;top:486px;" width="16" height="16" viewBox="0 0 16 16"><rect x="0" y="0" width="16" height="16" rx="2" fill="#4599ff"/><path d="M3.6 8.2 L6.8 11.2 L12.4 4.8" fill="none" stroke="#fff" stroke-width="1.3" stroke-linecap="round" stroke-linejoin="round"/></svg>
<div class="t " style="left:621px;top:484.5px;height:20px;line-height:20px;font-size:12px;color:#4599ff;">上架</div>
<div class="t " style="left:655px;top:484.5px;height:20px;line-height:20px;font-size:12px;color:#4599ff;">起购数量</div>
<div class="t " style="left:1384px;top:484.5px;height:20px;line-height:20px;font-size:12px;color:#606266;">已下架</div>
</div>
</div>
<div id="mask"></div>
<div id="modal">
<div class="b" style="left:-739px;top:-81px;width:1457px;height:823px">
<div class="t " style="left:759px;top:92.5px;height:26px;line-height:26px;font-size:18.72px;color:#333;">新增目录</div>
<div class="b" style="left:1300px;top:94px;width:24px;height:24px;background:#f2f2f2;border-radius:50%;"></div>
<div class="b" style="left:1335px;top:94px;width:24px;height:24px;background:#f2f2f2;border-radius:50%;"></div>
<svg class="b" style="left:1308px;top:101px;" width="10" height="10" viewBox="0 0 10 10"><path d="M0 0 L3 0 L0 3 Z" fill="#777"/><path d="M1 1 L3.9 3.9" stroke="#777" stroke-width="1.2" fill="none"/><path d="M10 0 L7 0 L10 3 Z" fill="#777"/><path d="M9 1 L6.1 3.9" stroke="#777" stroke-width="1.2" fill="none"/><path d="M0 10 L3 10 L0 7 Z" fill="#777"/><path d="M1 9 L3.9 6.1" stroke="#777" stroke-width="1.2" fill="none"/><path d="M10 10 L7 10 L10 7 Z" fill="#777"/><path d="M9 9 L6.1 6.1" stroke="#777" stroke-width="1.2" fill="none"/></svg>
<svg class="b" style="left:1343.8px;top:101.8px;" width="8.4" height="8.4" viewBox="0 0 8.4 8.4"><path d="M0.5 0.5 L7.9 7.9 M7.9 0.5 L0.5 7.9" stroke="#5c5c5c" stroke-width="1.3" fill="none"/></svg>
<div class="b" style="left:739px;top:130px;width:640px;height:1px;background:#e0e0e0;"></div>
<div class="t " style="left:759px;top:155px;height:22px;line-height:22px;font-size:14px;color:#333;">名称:</div>
<div class="b" style="left:795px;top:151px;width:564px;height:30px;border:1px solid #4a93ff;border-radius:4px;"></div>
<div class="b" style="left:802px;top:159px;width:1px;height:16px;background:#333;"></div>
<div class="t " style="left:803px;top:156px;height:20px;line-height:20px;font-size:12px;color:#bfbfbf;">请输入目录名(最大输入<span style="letter-spacing:0.33px">20</span>个字符)</div>
<div class="b" style="left:795px;top:191px;width:564px;height:142px;border:1px solid #ddd;border-radius:4px;"></div>
<div class="b" style="left:811px;top:207px;width:80px;height:80px;border:1px dashed #c4c4c4;border-radius:4px;"></div>
<svg class="b" style="left:837px;top:233px;" width="28" height="28" viewBox="0 0 28 28"><path d="M14 0 V28 M0 14 H28" stroke="#ccc" stroke-width="1.5" fill="none"/></svg>
<div class="t " style="left:759px;top:251.5px;height:22px;line-height:22px;font-size:14px;color:#333;">图标:</div>
<div class="t " style="left:1272px;top:236px;height:22px;line-height:22px;font-size:14px;color:#0000ee;"><u>图标模版</u></div>
<div class="t " style="left:811px;top:307px;height:20px;line-height:20px;font-size:12px;color:#c8c8c8;">一次只能上传一张图片,每张图片大小不超过2M,格式为<span style="letter-spacing:0.16px">:png</span>、<span style="letter-spacing:0.33px">jpg</span>、<span style="letter-spacing:0.20px">jpeg,</span>建议尺寸<span style="letter-spacing:0.28px">94*94px</span></div>
<div class="b" style="left:759px;top:343px;width:600px;height:390px;border:1px solid #e4e6f0;"></div>
<div class="b" style="left:760px;top:344px;width:598px;height:34px;background:#f3f4fa;"></div>
<div class="b" style="left:799px;top:344px;width:1px;height:385px;background:#e4e6f0;"></div>
<div class="b" style="left:889px;top:344px;width:1px;height:385px;background:#e4e6f0;"></div>
<div class="b" style="left:1116px;top:344px;width:1px;height:385px;background:#e4e6f0;"></div>
<svg class="b" style="left:772.0px;top:351.9px;" width="16" height="16" viewBox="0 0 16 16"><path d="M5.44 3.13 L6.06 2.85 L6.03 0.87 L9.97 0.87 L9.94 2.85 L10.56 3.13 L10.94 3.35 L11.49 3.75 L13.19 2.72 L15.16 6.14 L13.43 7.10 L13.50 7.78 L13.50 8.22 L13.43 8.90 L15.16 9.86 L13.19 13.28 L11.49 12.25 L10.94 12.65 L10.56 12.87 L9.94 13.15 L9.97 15.13 L6.03 15.13 L6.06 13.15 L5.44 12.87 L5.06 12.65 L4.51 12.25 L2.81 13.28 L0.84 9.86 L2.57 8.90 L2.50 8.22 L2.50 7.78 L2.57 7.10 L0.84 6.14 L2.81 2.72 L4.51 3.75 L5.06 3.35Z" fill="none" stroke="#484848" stroke-width="1.2" stroke-linejoin="round"/><circle cx="8" cy="8" r="2.4" fill="none" stroke="#484848" stroke-width="1.2"/></svg>
<div class="t " style="left:799px;top:349.8px;height:21px;line-height:21px;font-size:13px;color:#333;width:91px;text-align:center;">操作</div>
<div class="t " style="left:889px;top:349.8px;height:21px;line-height:21px;font-size:13px;color:#333;width:228px;text-align:center;">商品(套餐)编号</div>
<div class="t " style="left:1116px;top:349.8px;height:21px;line-height:21px;font-size:13px;color:#333;width:230px;text-align:center;">商品(套餐)名称</div>
<div class="b" style="left:760px;top:378px;width:598px;height:1px;background:#e4e6f0;"></div>
<div class="t " style="left:761px;top:386px;height:20px;line-height:20px;font-size:12px;color:#555;width:40px;text-align:center;">1</div>
<svg class="b" style="left:826px;top:389.4px;" width="12" height="12" viewBox="0 0 12 12"><path d="M6 0 V12 M0 6 H12" stroke="#333" stroke-width="1.7" fill="none"/></svg>
<svg class="b" style="left:852px;top:389.4px;" width="12" height="12" viewBox="0 0 12 12"><path d="M0 6 H12" stroke="#333" stroke-width="1.7" fill="none"/></svg>
<div class="t " style="left:1122px;top:386.5px;height:20px;line-height:20px;font-size:12px;color:#444;">冬瓜7</div>
<div class="b" style="left:760px;top:413px;width:598px;height:1px;background:#e4e6f0;"></div>
<div class="t " style="left:761px;top:421px;height:20px;line-height:20px;font-size:12px;color:#555;width:40px;text-align:center;">2</div>
<svg class="b" style="left:826px;top:424.4px;" width="12" height="12" viewBox="0 0 12 12"><path d="M6 0 V12 M0 6 H12" stroke="#333" stroke-width="1.7" fill="none"/></svg>
<svg class="b" style="left:852px;top:424.4px;" width="12" height="12" viewBox="0 0 12 12"><path d="M0 6 H12" stroke="#333" stroke-width="1.7" fill="none"/></svg>
<div class="t " style="left:1122px;top:421.5px;height:20px;line-height:20px;font-size:12px;color:#444;">冬瓜8</div>
<div class="b" style="left:760px;top:448px;width:598px;height:1px;background:#e4e6f0;"></div>
<div class="t " style="left:761px;top:456px;height:20px;line-height:20px;font-size:12px;color:#555;width:40px;text-align:center;">3</div>
<svg class="b" style="left:826px;top:459.4px;" width="12" height="12" viewBox="0 0 12 12"><path d="M6 0 V12 M0 6 H12" stroke="#333" stroke-width="1.7" fill="none"/></svg>
<svg class="b" style="left:852px;top:459.4px;" width="12" height="12" viewBox="0 0 12 12"><path d="M0 6 H12" stroke="#333" stroke-width="1.7" fill="none"/></svg>
<div class="t " style="left:1122px;top:456.5px;height:20px;line-height:20px;font-size:12px;color:#444;">冬瓜9</div>
<div class="b" style="left:760px;top:483px;width:598px;height:1px;background:#e4e6f0;"></div>
<div class="t " style="left:761px;top:491px;height:20px;line-height:20px;font-size:12px;color:#555;width:40px;text-align:center;">4</div>
<svg class="b" style="left:826px;top:494.4px;" width="12" height="12" viewBox="0 0 12 12"><path d="M6 0 V12 M0 6 H12" stroke="#333" stroke-width="1.7" fill="none"/></svg>
<svg class="b" style="left:852px;top:494.4px;" width="12" height="12" viewBox="0 0 12 12"><path d="M0 6 H12" stroke="#333" stroke-width="1.7" fill="none"/></svg>
<div class="t " style="left:1122px;top:491.5px;height:20px;line-height:20px;font-size:12px;color:#444;">冬瓜<span style="letter-spacing:0.33px">10</span></div>
<div class="b" style="left:760px;top:518px;width:598px;height:1px;background:#e4e6f0;"></div>
<div class="t " style="left:761px;top:526px;height:20px;line-height:20px;font-size:12px;color:#555;width:40px;text-align:center;">5</div>
<svg class="b" style="left:826px;top:529.4px;" width="12" height="12" viewBox="0 0 12 12"><path d="M6 0 V12 M0 6 H12" stroke="#333" stroke-width="1.7" fill="none"/></svg>
<svg class="b" style="left:852px;top:529.4px;" width="12" height="12" viewBox="0 0 12 12"><path d="M0 6 H12" stroke="#333" stroke-width="1.7" fill="none"/></svg>
<div class="t " style="left:1122px;top:526.5px;height:20px;line-height:20px;font-size:12px;color:#444;">冬瓜<span style="letter-spacing:0.33px">11</span></div>
<div class="b" style="left:760px;top:553px;width:598px;height:1px;background:#e4e6f0;"></div>
<div class="t " style="left:761px;top:561px;height:20px;line-height:20px;font-size:12px;color:#555;width:40px;text-align:center;">6</div>
<svg class="b" style="left:826px;top:564.4px;" width="12" height="12" viewBox="0 0 12 12"><path d="M6 0 V12 M0 6 H12" stroke="#333" stroke-width="1.7" fill="none"/></svg>
<svg class="b" style="left:852px;top:564.4px;" width="12" height="12" viewBox="0 0 12 12"><path d="M0 6 H12" stroke="#333" stroke-width="1.7" fill="none"/></svg>
<div class="t " style="left:895px;top:561px;height:20px;line-height:20px;font-size:12px;color:#444;"><span style="letter-spacing:0.25px">123-</span>湖蓝色<span style="letter-spacing:0.33px">_35</span></div>
<div class="t " style="left:1122px;top:561.5px;height:20px;line-height:20px;font-size:12px;color:#444;">冬瓜<span style="letter-spacing:0.33px">12</span></div>
<div class="b" style="left:760px;top:588px;width:598px;height:1px;background:#e4e6f0;"></div>
<div class="t " style="left:761px;top:596px;height:20px;line-height:20px;font-size:12px;color:#555;width:40px;text-align:center;">7</div>
<svg class="b" style="left:826px;top:599.4px;" width="12" height="12" viewBox="0 0 12 12"><path d="M6 0 V12 M0 6 H12" stroke="#333" stroke-width="1.7" fill="none"/></svg>
<svg class="b" style="left:852px;top:599.4px;" width="12" height="12" viewBox="0 0 12 12"><path d="M0 6 H12" stroke="#333" stroke-width="1.7" fill="none"/></svg>
<div class="t " style="left:1122px;top:596.5px;height:20px;line-height:20px;font-size:12px;color:#444;">冬瓜<span style="letter-spacing:0.33px">13</span></div>
<div class="b" style="left:760px;top:623px;width:598px;height:1px;background:#e4e6f0;"></div>
<div class="t " style="left:761px;top:631px;height:20px;line-height:20px;font-size:12px;color:#555;width:40px;text-align:center;">8</div>
<svg class="b" style="left:826px;top:634.4px;" width="12" height="12" viewBox="0 0 12 12"><path d="M6 0 V12 M0 6 H12" stroke="#333" stroke-width="1.7" fill="none"/></svg>
<svg class="b" style="left:852px;top:634.4px;" width="12" height="12" viewBox="0 0 12 12"><path d="M0 6 H12" stroke="#333" stroke-width="1.7" fill="none"/></svg>
<div class="t " style="left:1122px;top:631.5px;height:20px;line-height:20px;font-size:12px;color:#444;">冬瓜<span style="letter-spacing:0.33px">14</span></div>
<div class="b" style="left:760px;top:658px;width:598px;height:1px;background:#e4e6f0;"></div>
<div class="t " style="left:761px;top:666px;height:20px;line-height:20px;font-size:12px;color:#555;width:40px;text-align:center;">9</div>
<svg class="b" style="left:826px;top:669.4px;" width="12" height="12" viewBox="0 0 12 12"><path d="M6 0 V12 M0 6 H12" stroke="#333" stroke-width="1.7" fill="none"/></svg>
<svg class="b" style="left:852px;top:669.4px;" width="12" height="12" viewBox="0 0 12 12"><path d="M0 6 H12" stroke="#333" stroke-width="1.7" fill="none"/></svg>
<div class="t " style="left:1122px;top:666.5px;height:20px;line-height:20px;font-size:12px;color:#444;">冬瓜<span style="letter-spacing:0.33px">15</span></div>
<div class="b" style="left:760px;top:693px;width:598px;height:1px;background:#e4e6f0;"></div>
<div class="t " style="left:761px;top:701px;height:20px;line-height:20px;font-size:12px;color:#555;width:40px;text-align:center;"><span style="letter-spacing:0.33px">10</span></div>
<svg class="b" style="left:826px;top:704.4px;" width="12" height="12" viewBox="0 0 12 12"><path d="M6 0 V12 M0 6 H12" stroke="#333" stroke-width="1.7" fill="none"/></svg>
<svg class="b" style="left:852px;top:704.4px;" width="12" height="12" viewBox="0 0 12 12"><path d="M0 6 H12" stroke="#333" stroke-width="1.7" fill="none"/></svg>
<div class="t " style="left:895px;top:701px;height:20px;line-height:20px;font-size:12px;color:#444;"><span style="letter-spacing:0.33px">2131239819</span></div>
<div class="t " style="left:1122px;top:701.5px;height:20px;line-height:20px;font-size:12px;color:#444;">冬瓜<span style="letter-spacing:0.33px">16</span></div>
<div class="b" style="left:760px;top:728px;width:598px;height:1px;background:#e4e6f0;"></div>
<div class="b" style="left:759px;top:748px;width:600px;height:1px;background:#e4e6f0;"></div>
<div class="b" style="left:1209px;top:764px;width:60px;height:30px;background:#1f87ff;border-radius:2px;"></div>
<div class="t " style="left:1209px;top:768px;height:22px;line-height:22px;font-size:14px;color:#fff;width:60px;text-align:center;">保存</div>
<div class="b" style="left:1279px;top:764px;width:60px;height:30px;border:1px solid #ccc;border-radius:2px;background:#fff;"></div>
<div class="t " style="left:1279px;top:768px;height:22px;line-height:22px;font-size:14px;color:#333;width:60px;text-align:center;">取消</div>
</div>
</div>
</body>
</html>
